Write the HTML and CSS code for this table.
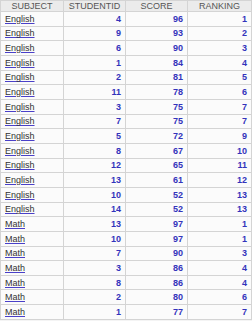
FILE: index.html
```html
<!DOCTYPE html>
<html>
<head>
<meta charset="utf-8">
<link rel="stylesheet" href="styles.css">
</head>
<body>
<table class="grid">
<colgroup><col class="c1"><col class="c2"><col class="c3"><col class="c4"></colgroup>
<thead>
<tr><th>SUBJECT</th><th>STUDENTID</th><th>SCORE</th><th>RANKING</th></tr>
</thead>
<tbody>
<tr><td class="subj"><a>English</a></td><td class="num">4</td><td class="num">96</td><td class="num">1</td></tr>
<tr><td class="subj"><a>English</a></td><td class="num">9</td><td class="num">93</td><td class="num">2</td></tr>
<tr><td class="subj"><a>English</a></td><td class="num">6</td><td class="num">90</td><td class="num">3</td></tr>
<tr><td class="subj"><a>English</a></td><td class="num">1</td><td class="num">84</td><td class="num">4</td></tr>
<tr><td class="subj"><a>English</a></td><td class="num">2</td><td class="num">81</td><td class="num">5</td></tr>
<tr><td class="subj"><a>English</a></td><td class="num">11</td><td class="num">78</td><td class="num">6</td></tr>
<tr><td class="subj"><a>English</a></td><td class="num">3</td><td class="num">75</td><td class="num">7</td></tr>
<tr><td class="subj"><a>English</a></td><td class="num">7</td><td class="num">75</td><td class="num">7</td></tr>
<tr><td class="subj"><a>English</a></td><td class="num">5</td><td class="num">72</td><td class="num">9</td></tr>
<tr><td class="subj"><a>English</a></td><td class="num">8</td><td class="num">67</td><td class="num">10</td></tr>
<tr><td class="subj"><a>English</a></td><td class="num">12</td><td class="num">65</td><td class="num">11</td></tr>
<tr><td class="subj"><a>English</a></td><td class="num">13</td><td class="num">61</td><td class="num">12</td></tr>
<tr><td class="subj"><a>English</a></td><td class="num">10</td><td class="num">52</td><td class="num">13</td></tr>
<tr><td class="subj"><a>English</a></td><td class="num">14</td><td class="num">52</td><td class="num">13</td></tr>
<tr><td class="subj"><a>Math</a></td><td class="num">13</td><td class="num">97</td><td class="num">1</td></tr>
<tr><td class="subj"><a>Math</a></td><td class="num">10</td><td class="num">97</td><td class="num">1</td></tr>
<tr><td class="subj"><a>Math</a></td><td class="num">7</td><td class="num">90</td><td class="num">3</td></tr>
<tr><td class="subj"><a>Math</a></td><td class="num">3</td><td class="num">86</td><td class="num">4</td></tr>
<tr><td class="subj"><a>Math</a></td><td class="num">8</td><td class="num">86</td><td class="num">4</td></tr>
<tr><td class="subj"><a>Math</a></td><td class="num">2</td><td class="num">80</td><td class="num">6</td></tr>
<tr><td class="subj"><a>Math</a></td><td class="num">1</td><td class="num">77</td><td class="num">7</td></tr>
</tbody>
</table>
</body>
</html>
```
FILE: styles.css
```css
html, body {
  margin: 0;
  padding: 0;
  background: #f4f4f4;
}
.grid {
  border-collapse: collapse;
  table-layout: fixed;
  width: 251px;
  height: 320px;
  font-family: "Liberation Sans", Arial, sans-serif;
  font-size: 9px;
  background: #fbfbfb;
  border-bottom: 1px solid #c8c8c8;
}
.c1 { width: 63px; }
.c2 { width: 62px; }
.c3 { width: 62px; }
.c4 { width: 64px; }
.grid th {
  background: #ebebeb;
  color: #555;
  font-weight: normal;
  text-align: center;
  border: 1px solid #d4d4d4;
  padding: 0;
}
.grid td {
  border: 1px solid #d4d4d4;
  padding: 0 4px;
  white-space: nowrap;
}
.subj a {
  color: #333;
  text-decoration: underline;
  text-decoration-color: #4a40c8;
}
.num {
  text-align: right;
  color: #3333bb;
  font-weight: bold;
}
```
